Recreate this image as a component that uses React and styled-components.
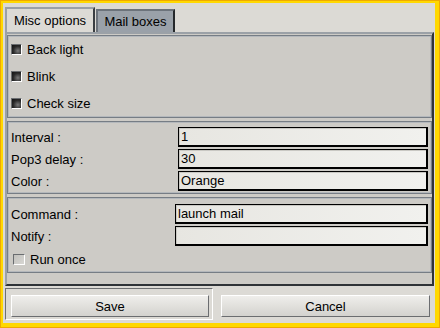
import React from "react";
import styled, { createGlobalStyle } from "styled-components";

const Global = createGlobalStyle`
  body {
    margin: 0;
    font-family: "Liberation Sans", Arial, sans-serif;
    font-size: 12px;
    color: #000;
  }
`;

const Window = styled.div`
  width: 440px;
  height: 328px;
  box-sizing: border-box;
  border-style: solid;
  border-color: #ffd800;
  border-width: 3px 5px 5px 3px;
  outline: 1px solid #efa900;
  outline-offset: -1px;
  background: #dcdad5;
  padding: 4px 1px 0 2px;
  display: flex;
  flex-direction: column;
`;

const TabBar = styled.div`
  display: flex;
  align-items: flex-end;
  height: 25px;
`;

const Tab = styled.div`
  box-sizing: border-box;
  width: ${(p) => (p.active ? "90px" : "79px")};
  height: ${(p) => (p.active ? "25px" : "23px")};
  margin-left: ${(p) => (p.active ? "0" : "1px")};
  display: flex;
  align-items: center;
  justify-content: center;
  padding-bottom: 1px;
  background: ${(p) => (p.active ? "#dcdad5" : "#9aa1a9")};
  border-style: solid;
  border-width: 2px 2px 0 2px;
  border-color: ${(p) =>
    p.active ? "#9aa0a7 #3a3e42 transparent #9aa0a7" : "#6c737b #25282b transparent #6c737b"};
  font-size: 13px;
`;

const Notebook = styled.div`
  box-sizing: border-box;
  width: 429px;
  height: 254px;
  background: #cdcbc6;
  border-style: solid;
  border-width: 2px;
  border-color: #9ba1a7 #2f3337 #2f3337 #9ba1a7;
  padding-top: 1px;
  display: flex;
  flex-direction: column;
  gap: 3px;
`;

const Frame = styled.div`
  box-sizing: border-box;
  height: ${(p) => p.h}px;
  border: 1px solid #767d85;
  box-shadow: inset 0 0 0 1px #b4b8bc;
  padding: ${(p) => p.pad};
  display: flex;
  flex-direction: column;
  gap: ${(p) => p.gap || 0}px;
`;

const CheckRow = styled.label`
  height: ${(p) => p.h || 27}px;
  display: flex;
  align-items: center;
  gap: 5px;
  padding-left: ${(p) => p.indent || 3}px;
  font-size: 13px;
`;

const Box = styled.span`
  box-sizing: border-box;
  width: ${(p) => (p.checked ? 11 : 12)}px;
  height: ${(p) => (p.checked ? 11 : 11)}px;
  border: 1px solid;
  border-color: #6a6d70 #ffffff #ffffff #6a6d70;
  background: ${(p) =>
    p.checked
      ? "radial-gradient(circle at 65% 65%, #7a7a7a 0%, #2a2a2a 55%, #111 100%)"
      : "linear-gradient(135deg, #c2c1bd, #d8d7d3)"};
`;

const Field = styled.div`
  display: grid;
  grid-template-columns: ${(p) => p.label}px 1fr;
  align-items: center;
  height: 20px;
  padding: 0 3px;
`;

const Label = styled.span`
  font-size: 13px;
`;

const Input = styled.div`
  box-sizing: border-box;
  height: 20px;
  border: 1px solid #000;
  border-right-width: 2px;
  border-bottom-width: 2px;
  background: linear-gradient(to right, #e7e6e1, #f1f1ee);
  box-shadow: inset 1px 1px 0 #c9c8c3;
  padding: 0 2px;
  display: flex;
  align-items: center;
  font-size: 13px;
`;

const ButtonBar = styled.div`
  display: flex;
  height: 37px;
  padding-top: 2px;
  box-sizing: border-box;
  gap: 8px;
`;

const DefaultFrame = styled.div`
  box-sizing: border-box;
  width: 208px;
  height: 32px;
  border: 1px solid;
  border-color: #6e7072 #ffffff #ffffff #6e7072;
  padding: 6px 3px 2px 5px;
`;

const Button = styled.button`
  box-sizing: border-box;
  width: ${(p) => p.w}px;
  height: 22px;
  margin-top: ${(p) => p.top || 0}px;
  border: 1px solid;
  border-color: #ffffff #6b6d70 #6b6d70 #ffffff;
  background: linear-gradient(to bottom, #efeeeb, #d3d2ce);
  font-family: "Liberation Sans", Arial, sans-serif;
  font-size: 13px;
  color: #000;
  padding: 0;
`;

export default function App() {
  return (
    <>
      <Global />
      <Window>
        <TabBar>
          <Tab active>Misc options</Tab>
          <Tab>Mail boxes</Tab>
        </TabBar>
        <Notebook>
          <Frame h={83}>
            <CheckRow>
              <Box checked />
              Back light
            </CheckRow>
            <CheckRow>
              <Box checked />
              Blink
            </CheckRow>
            <CheckRow>
              <Box checked />
              Check size
            </CheckRow>
          </Frame>
          <Frame h={73} pad="5px 0 2px" gap={2}>
            <Field label={167}>
              <Label>Interval :</Label>
              <Input>1</Input>
            </Field>
            <Field label={167}>
              <Label>Pop3 delay :</Label>
              <Input>30</Input>
            </Field>
            <Field label={167}>
              <Label>Color :</Label>
              <Input>Orange</Input>
            </Field>
          </Frame>
          <Frame h={76} pad="6px 0 2px" gap={2}>
            <Field label={164}>
              <Label>Command :</Label>
              <Input>launch mail</Input>
            </Field>
            <Field label={164}>
              <Label>Notify :</Label>
              <Input />
            </Field>
            <CheckRow h={22} indent={5}>
              <Box />
              Run once
            </CheckRow>
          </Frame>
        </Notebook>
        <ButtonBar>
          <DefaultFrame>
            <Button w={198}>Save</Button>
          </DefaultFrame>
          <Button w={209} top={7}>
            Cancel
          </Button>
        </ButtonBar>
      </Window>
    </>
  );
}
